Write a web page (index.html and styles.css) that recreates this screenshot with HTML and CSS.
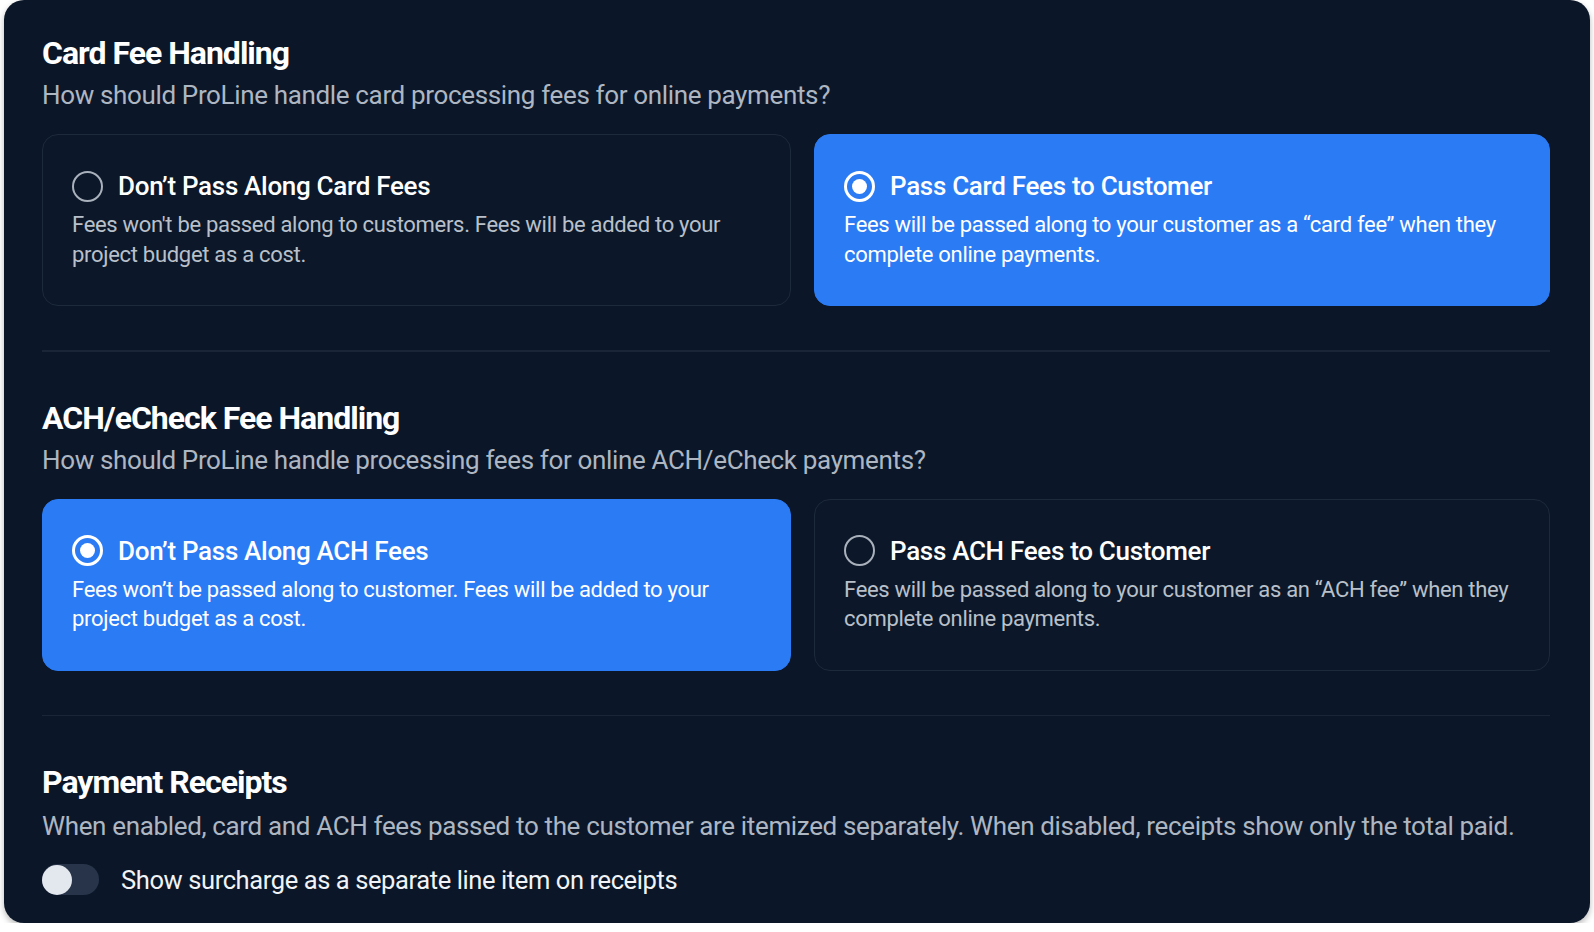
FILE: index.html
```html
<!DOCTYPE html>
<html lang="en">
<head>
<meta charset="utf-8">
<title>Payment Fee Settings</title>
<link rel="stylesheet" href="styles.css">
</head>
<body>
<main class="panel">
  <section class="group">
    <h2 class="group-title">Card Fee Handling</h2>
    <p class="group-sub">How should ProLine handle card processing fees for online payments?</p>
    <div class="options">
      <label class="option">
        <span class="option-head"><span class="radio"></span><span class="option-title">Don’t Pass Along Card Fees</span></span>
        <span class="option-desc">Fees won't be passed along to customers. Fees will be added to your project budget as a cost.</span>
      </label>
      <label class="option is-selected">
        <span class="option-head"><span class="radio"></span><span class="option-title">Pass Card Fees to Customer</span></span>
        <span class="option-desc">Fees will be passed along to your customer as a “card fee” when they complete online payments.</span>
      </label>
    </div>
  </section>

  <hr class="divider">

  <section class="group">
    <h2 class="group-title">ACH/eCheck Fee Handling</h2>
    <p class="group-sub">How should ProLine handle processing fees for online ACH/eCheck payments?</p>
    <div class="options">
      <label class="option is-selected">
        <span class="option-head"><span class="radio"></span><span class="option-title">Don’t Pass Along ACH Fees</span></span>
        <span class="option-desc">Fees won’t be passed along to customer. Fees will be added to your project budget as a cost.</span>
      </label>
      <label class="option">
        <span class="option-head"><span class="radio"></span><span class="option-title">Pass ACH Fees to Customer</span></span>
        <span class="option-desc">Fees will be passed along to your customer as an “ACH fee” when they complete online payments.</span>
      </label>
    </div>
  </section>

  <hr class="divider">

  <section class="group">
    <h2 class="group-title">Payment Receipts</h2>
    <p class="group-sub group-sub-last">When enabled, card and ACH fees passed to the customer are itemized separately. When disabled, receipts show only the total paid.</p>
    <div class="switch-row">
      <span class="switch"><span class="knob"></span></span>
      <span class="switch-label">Show surcharge as a separate line item on receipts</span>
    </div>
  </section>
</main>
</body>
</html>
```

FILE: styles.css
```css
* { box-sizing: border-box; }

html, body {
  margin: 0;
  padding: 0;
  background: #ffffff;
}

body {
  font-family: Roboto, "Liberation Sans", sans-serif;
  color: #ffffff;
}

.panel {
  margin-left: 4px;
  width: 1586px;
  height: 923px;
  background: #0b1728;
  border-radius: 20px;
  box-shadow: 0 3px 6px rgba(0, 0, 0, 0.28);
  padding: 33px 40px 0 38px;
}

.group-title {
  margin: 0;
  font-size: 32px;
  line-height: 40px;
  font-weight: 700;
  letter-spacing: -1px;
  color: #ffffff;
}

.group-sub {
  margin: 3px 0 0;
  font-size: 26px;
  line-height: 38px;
  font-weight: 400;
  letter-spacing: -0.35px;
  color: #aeb6c2;
}

.group-sub-last {
  margin-top: 5px;
}

.options {
  display: grid;
  grid-template-columns: 749px 1fr;
  gap: 23px;
  margin-top: 20px;
}

.option {
  display: flex;
  flex-direction: column;
  height: 172px;
  padding: 34px 30px 0 29px;
  border: 1.5px solid #1d2a3c;
  border-radius: 16px;
  background: #0c1829;
}

.option.is-selected {
  background: #2b7bf5;
  border-color: #2b7bf5;
}

.option-head {
  display: flex;
  align-items: center;
  gap: 15px;
  height: 34px;
}

.radio {
  flex: none;
  width: 31px;
  height: 31px;
  border-radius: 50%;
  border: 2px solid #a9b1bc;
  position: relative;
}

.is-selected .radio {
  border: 3px solid #ffffff;
}

.is-selected .radio::after {
  content: "";
  position: absolute;
  left: 50%;
  top: 50%;
  width: 15px;
  height: 15px;
  margin: -7.5px 0 0 -7.5px;
  border-radius: 50%;
  background: #ffffff;
}

.option-title {
  font-size: 26px;
  font-weight: 500;
  letter-spacing: -0.3px;
  color: #ffffff;
}

.option-desc {
  margin-top: 7px;
  font-size: 22px;
  line-height: 29.5px;
  letter-spacing: -0.3px;
  color: #b9c0ca;
}

.is-selected .option-desc {
  color: #ffffff;
}

.divider {
  margin: 44px 0 46px;
  border: 0;
  height: 1.5px;
  background: #1a2638;
}

.switch-row {
  display: flex;
  align-items: center;
  gap: 22px;
  margin-top: 19px;
}

.switch {
  flex: none;
  width: 57px;
  height: 31px;
  border-radius: 16px;
  background: #28344a;
  display: flex;
  align-items: center;
}

.knob {
  width: 30px;
  height: 30px;
  border-radius: 50%;
  background: #e3e7ee;
}

.switch-label {
  font-size: 25.5px;
  letter-spacing: -0.4px;
  color: #f1f3f6;
}
```
